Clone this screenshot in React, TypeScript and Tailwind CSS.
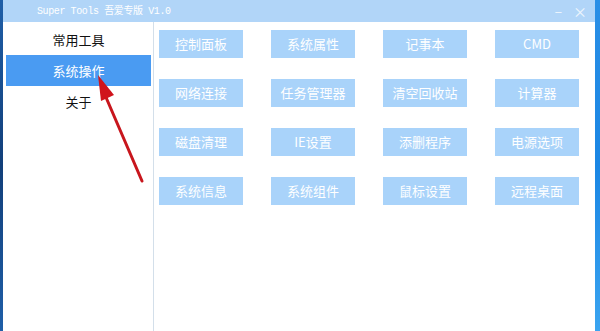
import { useState } from 'react'

const tools = [
    '控制面板', '系统属性', '记事本', 'CMD',
    '网络连接', '任务管理器', '清空回收站', '计算器',
    '磁盘清理', 'IE设置', '添删程序', '电源选项',
    '系统信息', '系统组件', '鼠标设置', '远程桌面'
]

const menu = ['常用工具', '系统操作', '关于']

export default function App() {
    const [active, setActive] = useState(1)

    return (
        <div className="relative w-[600px] h-[331px] overflow-hidden flex bg-[#1d6fc4] font-['Noto_Sans_CJK_SC','Noto_Sans',sans-serif]">
            <div className="w-[3px] bg-gradient-to-b from-[#1f5fa8] via-[#123f7a] to-[#1f5fa8]" />

            <div className="w-[592px] flex flex-col bg-white">
                {/* title bar */}
                <div className="h-[22px] bg-[#b1d5f8] flex items-center text-white">
                    <span className="ml-[34px] text-[10px] tracking-[-0.4px] font-['Liberation_Mono','Noto_Sans_CJK_SC',monospace]">
                        Super Tools 吾爱专版 V1.0
                    </span>
                    <span className="ml-auto text-[13px] leading-none text-[#eef5fd]">−</span>
                    <span className="ml-[11px] mr-[8px] text-[14px] leading-none text-[#eef5fd]">×</span>
                </div>

                <div className="flex flex-1">
                    {/* sidebar */}
                    <div className="w-[151px] border-r border-[#d3dfea] pt-[2px]">
                        {menu.map((m, i) => (
                            <div
                                key={m}
                                onClick={() => setActive(i)}
                                className={`ml-[3px] mr-[2px] h-[31px] flex items-center justify-center text-[13px] cursor-pointer ${
                                    i === active ? 'bg-[#4a9bf2] text-white' : 'text-[#111]'
                                }`}
                            >
                                {m}
                            </div>
                        ))}
                    </div>

                    {/* content */}
                    <div className="flex-1 pl-[5px] pt-[8px]">
                        <div className="grid grid-cols-[repeat(4,84px)] gap-x-[28px] gap-y-[21px]">
                            {tools.map(t => (
                                <button
                                    key={t}
                                    className="h-[28px] bg-[#a9d3fa] text-white text-[13px] flex items-center justify-center"
                                >
                                    {t}
                                </button>
                            ))}
                        </div>
                    </div>
                </div>
            </div>

            <div className="w-[5px] bg-gradient-to-b from-[#2a8fe6] via-[#1a86e4] to-[#3aa4f0]" />

            {/* annotation arrow */}
            <svg className="absolute left-0 top-0 pointer-events-none" width="600" height="331">
                <line x1="142" y1="181" x2="105" y2="95" stroke="#c8161d" strokeWidth="3" strokeLinecap="round" />
                <polygon points="98,75 114,95 101,101" fill="#d0141c" />
            </svg>
        </div>
    )
}
